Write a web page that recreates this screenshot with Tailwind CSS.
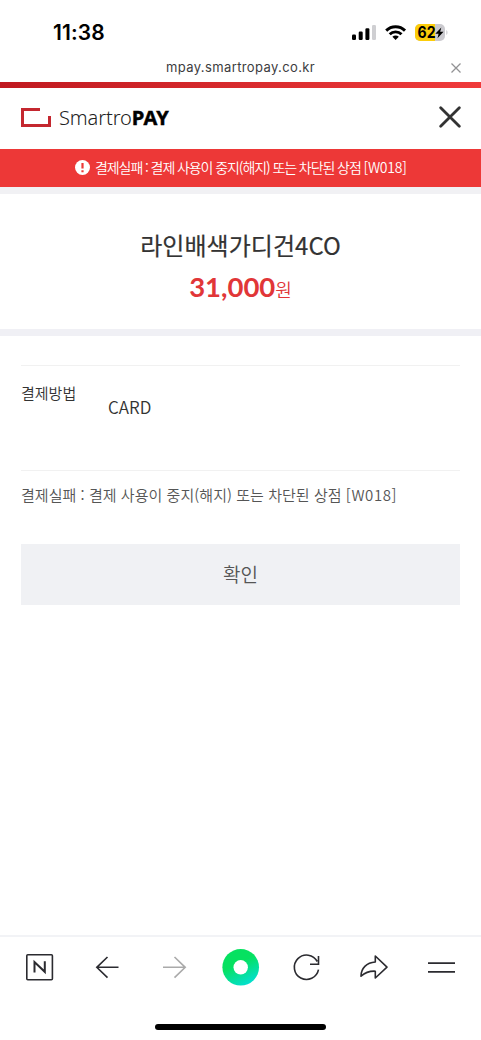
<!DOCTYPE html>
<html lang="ko">
<head>
<meta charset="utf-8">
<meta name="viewport" content="width=device-width, initial-scale=1">
<title>SmartroPAY</title>
<script src="https://cdn.jsdelivr.net/npm/@tailwindcss/browser@4"></script>
</head>
<body class="bg-white">
<div class="flex h-[1040px] w-[481px] flex-col overflow-hidden bg-white font-['Noto_Sans_CJK_KR',sans-serif] whitespace-nowrap text-[#333]">
  <div class="flex h-[54px] shrink-0 items-center pt-[11px] pr-[33px] pl-[53px]">
    <span class="font-['Inter',sans-serif] text-[21px] leading-none font-semibold tracking-[0.1px] text-black">11:38</span>
    <svg class="ml-auto" width="96" height="20" viewBox="0 0 96 20">
      <rect x="0" y="11.5" width="4" height="5.5" rx="1.2"/>
      <rect x="6.7" y="8.5" width="4" height="8.5" rx="1.2"/>
      <rect x="13.4" y="5.3" width="4" height="11.7" rx="1.2"/>
      <rect x="20" y="2" width="4" height="15" rx="1.2" fill="#cfcfd2"/>
      <g fill="none" stroke="#000" stroke-width="2.9">
        <path d="M34.2 7.6a13.3 13.3 0 0 1 18.8 0"/>
        <path d="M37.7 11.3a8.4 8.4 0 0 1 11.8 0"/>
      </g>
      <path d="M43.6 17l-3.2-3.2a4.5 4.5 0 0 1 6.4 0z"/>
      <clipPath id="bat"><rect x="63" y="1" width="30" height="17" rx="5"/></clipPath>
      <g clip-path="url(#bat)"><rect x="63" y="1" width="30" height="17" fill="#cbcacf"/><rect x="63" y="1" width="20" height="17" fill="#fccd0a"/></g>
      <path d="M94.3 7v5c1.6-.8 1.6-4.2 0-5z" fill="#cbcacf"/>
      <text x="65.5" y="15" font-family="Inter, sans-serif" font-weight="700" font-size="15.5" textLength="18" lengthAdjust="spacingAndGlyphs">62</text>
      <path d="M89.3 4.5l-6 6.3h3.3l-1.1 4.5 6-6.5h-3.3z"/>
    </svg>
  </div>
  <div class="flex h-7 shrink-0 items-center pr-5">
    <span class="ml-[166px] font-['Inter',sans-serif] text-[13px] tracking-[0.38px] text-[#3c3c3e]">mpay.smartropay.co.kr</span>
    <svg class="ml-auto" width="10" height="10" viewBox="0 0 10 10" stroke="#929294" stroke-width="1.3"><path d="M.5.5l9 9M9.5.5l-9 9"/></svg>
  </div>
  <div class="h-[6px] shrink-0 bg-linear-to-r from-[#c01920] to-[#f03a3b]"></div>
  <header class="flex h-[61px] shrink-0 items-center pr-[20px] pb-[3px] pl-[21px]">
    <svg width="30" height="19" viewBox="0 0 30 19" fill="none" stroke="#c4272f" stroke-width="3"><path d="M19 1.5H1.5v16h27V8"/></svg>
    <span class="ml-[8px] pt-[2px] font-['Noto_Sans',sans-serif] text-[20px] leading-6 font-light tracking-[-0.1px] text-[#222]">Smartro<b class="font-['Open_Sans',sans-serif] font-bold tracking-[-0.9px] text-black [-webkit-text-stroke:0.5px_#000]">PAY</b></span>
    <svg class="ml-auto" width="22" height="22" viewBox="0 0 22 22" stroke="#333" stroke-width="2.8" stroke-linecap="round"><path d="M1.7 1.7l18.6 18.6M20.3 1.7L1.7 20.3"/></svg>
  </header>
  <div class="flex h-[38px] shrink-0 items-center bg-[#ed3837] pb-[2px] pl-[75px] text-white">
    <svg width="15" height="15" viewBox="0 0 15 15"><circle cx="7.5" cy="7.5" r="7.5" fill="#fff"/><path d="M7.5 3v5.5M7.5 10.2v2" stroke="#ed3837" stroke-width="2.2"/></svg>
    <span class="ml-[5px] text-[14px] leading-5 font-[350] tracking-[-1.08px]">결제실패 : 결제 사용이 중지(해지) 또는 차단된 상점 <span class="tracking-[-0.25px]">[W018]</span></span>
  </div>
  <div class="h-[7px] shrink-0 bg-[#f1f1f4]"></div>
  <section class="flex h-[135px] shrink-0 flex-col items-center pt-[33px]">
    <h1 class="text-[24px] leading-9 font-normal tracking-[0.05px] [-webkit-text-stroke:0.2px_#333]">라인배색가디건4CO</h1>
    <p class="mt-[6px] flex items-baseline leading-9 text-[#e13638]"><b class="font-['Lato',sans-serif] text-[27.5px] font-bold">31,000</b><span class="text-[18px] font-[350]">원</span></p>
  </section>
  <div class="h-[7px] shrink-0 bg-[#f0f0f5]"></div>
  <main class="flex flex-1 flex-col px-[21px] pt-[29px]">
    <div class="flex h-[106px] border-y border-[#f1f1f1]">
      <span class="w-[87px] pt-[15px] text-[15px] leading-6 font-[350]">결제방법</span>
      <span class="pt-[29px] text-[17px] leading-6 font-[350]">CARD</span>
    </div>
    <p class="mt-[12px] text-[15px] leading-6 font-[350] tracking-[0.04px] text-[#555]">결제실패 : 결제 사용이 중지(해지) 또는 차단된 상점 <span class="tracking-[0.6px]">[W018]</span></p>
    <button class="mt-[37px] flex h-[61px] items-center justify-center bg-[#f0f1f4] text-[19px] font-[350] text-[#555]">확인</button>
  </main>
  <nav class="flex h-[105px] shrink-0 flex-col items-center border-t-2 border-[#f2f3f6]">
    <svg width="481" height="60" viewBox="0 937 481 60" fill="none" stroke="#2b2b30" stroke-width="1.6">
      <rect x="26.8" y="954.8" width="25.6" height="25" rx="1"/>
      <path d="M34.5 972.5V962l10.3 9.8V961.3" stroke-width="2"/>
      <path d="M107.5 957l-10.7 10.3 10.7 10.3M97 967.3h21.5"/>
      <path d="M174.5 957l10.7 10.3-10.7 10.3M185 967.3h-22" stroke="#aaa"/>
      <defs><linearGradient id="g" x1=".3" y1=".2" x2=".7" y2="1"><stop offset=".25" stop-color="#06e160"/><stop offset="1" stop-color="#03dfd5"/></linearGradient></defs>
      <circle cx="240.7" cy="967.3" r="18.3" fill="url(#g)" stroke="none"/><circle cx="240.7" cy="967.3" r="7.2" fill="#fff" stroke="none"/>
      <path d="M317.3 961.5a12.2 12.2 0 1 0 1.2 8.2M318.5 956v8.2h-8.5"/>
      <path d="M375.3 956l11.7 11.2-11.7 10.8v-6.8c-6.5-.3-10.5 1.6-14.3 5 0-7.7 5.500-13.700 14.300-14.200z" stroke-linejoin="round"/>
      <path d="M428 963.2h27M428 971.8h27" stroke-width="1.8"/>
    </svg>
    <div class="mt-[27px] h-[6px] w-[171px] shrink-0 rounded-full bg-black"></div>
  </nav>
</div>
</body>
</html>
